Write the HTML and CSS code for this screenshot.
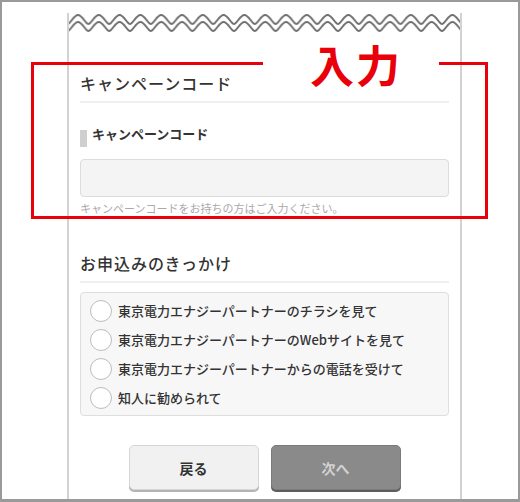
FILE: index.html
```html
<!doctype html>
<html lang="ja">

<head>
  <meta charset="UTF-8" />
  <meta name="viewport" content="width=device-width, initial-scale=1" />
  <title>キャンペーンコード入力</title>
  <link rel="stylesheet" href="styles.css">
</head>

<body>
  <div class="frame">
    <div class="phone">
      <!-- torn edge at the top of the screen -->
      <svg class="wave" width="391" height="24" viewBox="0 0 391 24">
        <defs>
          <pattern id="zig" x="-1.4" y="0" width="20.8" height="24" patternUnits="userSpaceOnUse">
            <path d="M0,11 C3,11 6,2 10.4,2 C14.8,2 17.8,11 20.8,11" fill="none" stroke="#707070" stroke-width="1.8" />
            <path d="M0,18 C3,18 6,9 10.4,9 C14.8,9 17.8,18 20.8,18" fill="none" stroke="#707070" stroke-width="1.8" />
          </pattern>
        </defs>
        <rect width="391" height="24" fill="url(#zig)" />
      </svg>

      <h2 class="section-title">キャンペーンコード</h2>
      <div class="field-label"><span class="label-bar"></span>キャンペーンコード</div>
      <input type="text" class="text-input" />
      <p class="help">キャンペーンコードをお持ちの方はご入力ください。</p>

      <h2 class="section-title second">お申込みのきっかけ</h2>
      <div class="radio-box">
        <label class="radio-row"><span class="radio"></span>東京電力エナジーパートナーのチラシを見て</label>
        <label class="radio-row"><span class="radio"></span>東京電力エナジーパートナーのWebサイトを見て</label>
        <label class="radio-row"><span class="radio"></span>東京電力エナジーパートナーからの電話を受けて</label>
        <label class="radio-row"><span class="radio"></span>知人に勧められて</label>
      </div>

      <div class="buttons">
        <button class="btn back">戻る</button>
        <button class="btn next">次へ</button>
      </div>
    </div>

    <!-- red callout drawn over the screen -->
    <div class="callout">
      <div class="callout-head">
        <span class="callout-line left"></span>
        <span class="callout-text">入力</span>
        <span class="callout-line right"></span>
      </div>
    </div>
  </div>
</body>

</html>
```

FILE: styles.css
```css
body {
  margin: 0;
  font-family: "Noto Sans CJK JP", "Noto Sans", sans-serif;
  color: #333;
  background-color: white;
}

.frame {
  position: relative;
  width: 520px;
  height: 502px;
  border: 2px solid #9a9a9a;
  border-bottom-width: 3px;
  box-sizing: border-box;
  overflow: hidden;
  background-color: white;
}

.phone {
  margin-left: 65px;
  width: 395px;
  height: 100%;
  padding: 0 11px;
  border-left: 2px solid #d2d2d2;
  border-right: 2px solid #d2d2d2;
  box-sizing: border-box;
}

.wave {
  display: block;
  margin: 11px -11px 0;
}

.section-title {
  margin: 34px 0 0;
  padding-bottom: 6px;
  height: 24px;
  line-height: 24px;
  font-size: 16px;
  font-weight: 500;
  letter-spacing: 1px;
  color: #333;
  border-bottom: 2px solid #efefef;
}

.section-title.second {
  margin-top: 36px;
}

.field-label {
  display: flex;
  align-items: flex-start;
  margin-top: 23px;
  height: 21px;
  line-height: 16px;
  font-size: 13px;
  font-weight: bold;
  color: #333;
}

.label-bar {
  width: 7px;
  height: 17px;
  margin: 4px 5px 0 0;
  background-color: #cfcfcf;
}

.text-input {
  display: block;
  width: 100%;
  height: 38px;
  margin-top: 12px;
  border: 1px solid #dcdcdc;
  border-radius: 4px;
  background-color: #f4f4f4;
  box-sizing: border-box;
}

.help {
  margin: 4px 0 0;
  line-height: 14px;
  font-size: 11px;
  color: #aaa;
}

.radio-box {
  margin-top: 9px;
  padding: 3px 9px;
  border: 1px solid #dedede;
  border-radius: 4px;
  background-color: #f7f7f7;
}

.radio-row {
  display: flex;
  align-items: center;
  height: 29px;
  font-size: 13px;
  font-weight: 500;
  color: #333;
}

.radio {
  width: 22px;
  height: 22px;
  margin-right: 6px;
  border: 1.5px solid #bdbdbd;
  border-radius: 50%;
  background-color: white;
  box-sizing: border-box;
  flex: none;
}

.buttons {
  display: flex;
  justify-content: center;
  gap: 12px;
  margin-top: 29px;
}

.btn {
  width: 130px;
  height: 45px;
  border-radius: 5px;
  font-family: "Noto Sans CJK JP", sans-serif;
  font-size: 14px;
  font-weight: bold;
}

.btn.back {
  background-color: #f1f1f1;
  border: 1px solid #d6d6d6;
  box-shadow: 0 2px 0 #b4b4b4;
  color: #333;
}

.btn.next {
  background-color: #8a8a8a;
  border: 1px solid #7a7a7a;
  box-shadow: 0 2px 0 #5e5e5e;
  color: #d2d2d2;
}

.callout {
  position: absolute;
  left: 29px;
  top: 60px;
  width: 457px;
  height: 157px;
  border: 3px solid #e8000b;
  border-top: 0;
  box-sizing: border-box;
}

.callout-head {
  display: flex;
  align-items: center;
  height: 3px;
  margin: 0 -3px;
}

.callout-line {
  height: 3px;
  background-color: #e8000b;
}

.callout-line.left {
  width: 232px;
}

.callout-line.right {
  flex: 1;
}

.callout-text {
  margin: 0 37px 0 47px;
  line-height: 44px;
  font-size: 44px;
  font-weight: bold;
  letter-spacing: 2px;
  color: #e8000b;
}
```
